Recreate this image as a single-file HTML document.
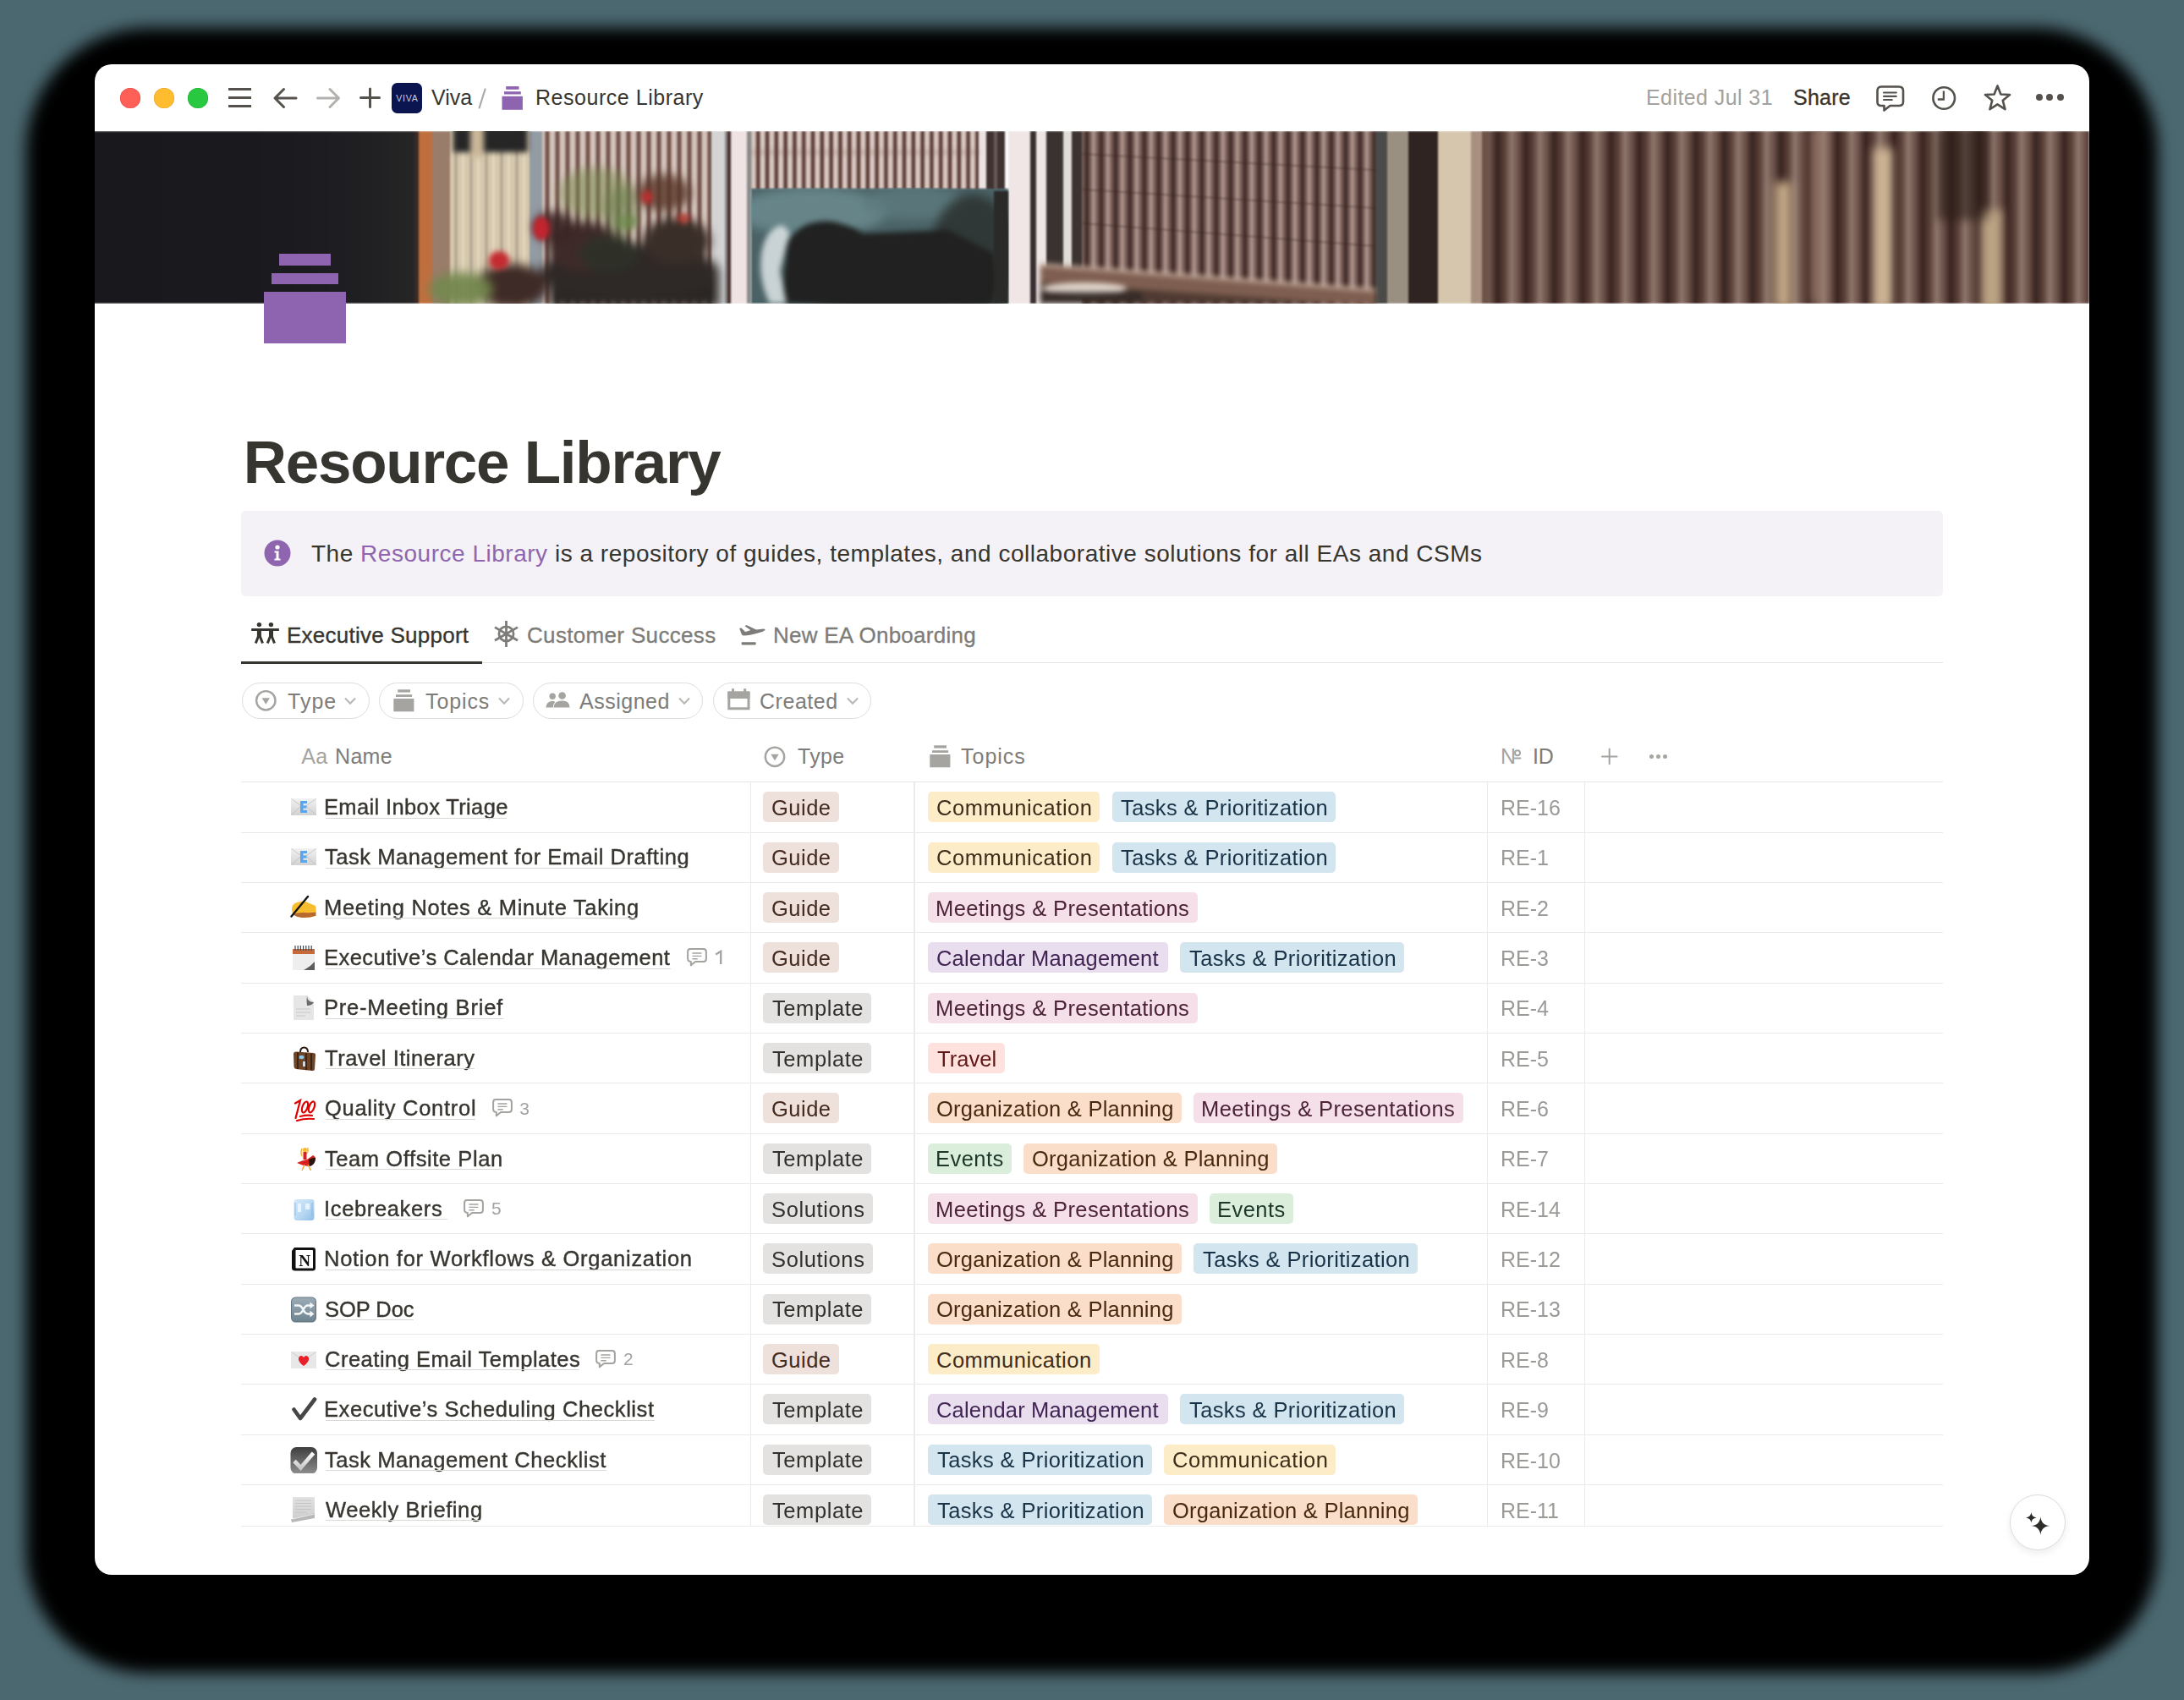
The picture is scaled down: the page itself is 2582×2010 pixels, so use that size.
<!DOCTYPE html><html><head><meta charset="utf-8"><style>
html,body{margin:0;padding:0}
body{width:2582px;height:2010px;position:relative;overflow:hidden;background:#4b6870;font-family:"Liberation Sans",sans-serif;font-kerning:normal}
.t{position:absolute;white-space:nowrap;line-height:normal}
svg{display:block}
</style></head><body>
<div style="position:absolute;left:31px;top:33px;width:2520px;height:1945px;background:#000;border-radius:145px;filter:blur(9px)"></div>
<div style="position:absolute;left:112px;top:76px;width:2358px;height:1786px;background:#fff;border-radius:20px;overflow:hidden"></div>
<div style="position:absolute;left:142px;top:103.5px;width:24px;height:24px;background:#fe5f57;border-radius:50%;box-shadow:inset 0 0 0 0.5px #e14640"></div>
<div style="position:absolute;left:182px;top:103.5px;width:24px;height:24px;background:#febc2e;border-radius:50%;box-shadow:inset 0 0 0 0.5px #dfa123"></div>
<div style="position:absolute;left:222px;top:103.5px;width:24px;height:24px;background:#28c840;border-radius:50%;box-shadow:inset 0 0 0 0.5px #1dad2b"></div>
<div style="position:absolute;left:269.5px;top:103.5px;width:27.5px;height:3px;background:#55514c"></div>
<div style="position:absolute;left:269.5px;top:113.7px;width:27.5px;height:3px;background:#55514c"></div>
<div style="position:absolute;left:269.5px;top:124.1px;width:27.5px;height:3px;background:#55514c"></div>
<svg style="position:absolute;left:318px;top:100px" width="40" height="32" viewBox="0 0 40 32"><path d="M7 16 H32 M17.5 5.5 L7 16 L17.5 26.5" fill="none" stroke="#55514c" stroke-width="3" stroke-linecap="round" stroke-linejoin="round"/></svg>
<svg style="position:absolute;left:368px;top:100px" width="40" height="32" viewBox="0 0 40 32"><path d="M7.5 16 H32 M22 5.5 L32.5 16 L22 26.5" fill="none" stroke="#b3b1ad" stroke-width="3" stroke-linecap="round" stroke-linejoin="round"/></svg>
<svg style="position:absolute;left:420px;top:100px" width="36" height="32" viewBox="0 0 36 32"><path d="M17.5 5 V26.5 M6.5 15.5 H28.5" fill="none" stroke="#55514c" stroke-width="3" stroke-linecap="round"/></svg>
<div style="position:absolute;left:463.2px;top:98px;width:35.7px;height:35.8px;background:#0b1651;border-radius:6.5px"></div>
<div class="t" style="left:463.2px;top:109.6px;width:36.3px;text-align:center;font-size:10.6px;line-height:12px;color:#d0cadc;letter-spacing:0.7px">VIVA</div>
<div id="tb_viva" class="t" style="left:510.00px;top:101.38px;font-size:25px;color:#37352f;font-weight:400;letter-spacing:0.000px;">Viva</div>
<svg style="position:absolute;left:560px;top:100px" width="20" height="32" viewBox="0 0 20 32"><path d="M13.6 5.4 L6.6 27.6" stroke="#a8a7a3" stroke-width="2" stroke-linecap="round"/></svg>
<svg style="position:absolute;left:593px;top:101px" width="27" height="29" viewBox="0 0 27 29"><rect x="5.2" y="1.1" width="15.3" height="3.7" fill="#8e64b0"/><rect x="3" y="7.2" width="19.8" height="3.3" fill="#8e64b0"/><rect x="0.5" y="12.8" width="24.4" height="16" fill="#8e64b0"/></svg>
<div id="tb_rl" class="t" style="left:633.00px;top:101.38px;font-size:25px;color:#37352f;font-weight:400;letter-spacing:0.533px;">Resource Library</div>
<div id="tb_edited" class="t" style="left:1946.00px;top:101.38px;font-size:25px;color:#a3a29e;font-weight:400;letter-spacing:0.417px;">Edited Jul 31</div>
<div id="tb_share" class="t" style="left:2120.00px;top:101.38px;font-size:25px;color:#37352f;font-weight:400;letter-spacing:0.250px;-webkit-text-stroke:0.3px #37352f">Share</div>
<svg style="position:absolute;left:2214px;top:98px" width="40" height="36" viewBox="0 0 40 36"><path d="M10 4.5 H31 Q36 4.5 36 9.5 V22.5 Q36 27 31 27 H20.5 L13.5 32.5 V27 H10 Q5.5 27 5.5 22.5 V9.5 Q5.5 4.5 10 4.5 Z" fill="none" stroke="#55514c" stroke-width="2.6" stroke-linejoin="round"/><path d="M13 11.5 H27.8 M13 15.8 H27.8 M13 20 H22.8" stroke="#55514c" stroke-width="2.2" stroke-linecap="round"/></svg>
<svg style="position:absolute;left:2280px;top:98px" width="36" height="36" viewBox="0 0 36 36"><circle cx="18.2" cy="18" r="12.8" fill="none" stroke="#55514c" stroke-width="2.6"/><path d="M17.9 9.5 V19.5 H10.8" fill="none" stroke="#55514c" stroke-width="2.3"/></svg>
<svg style="position:absolute;left:2340px;top:96px" width="44" height="40" viewBox="0 0 44 40"><polygon points="21.50,5.50 25.38,15.46 36.05,16.07 27.78,22.84 30.49,33.18 21.50,27.40 12.51,33.18 15.22,22.84 6.95,16.07 17.62,15.46" fill="none" stroke="#55514c" stroke-width="2.6" stroke-linejoin="round"/></svg>
<div style="position:absolute;left:2406.6px;top:111px;width:8px;height:8px;background:#55514c;border-radius:50%"></div>
<div style="position:absolute;left:2419.2px;top:111px;width:8px;height:8px;background:#55514c;border-radius:50%"></div>
<div style="position:absolute;left:2431.6px;top:111px;width:8px;height:8px;background:#55514c;border-radius:50%"></div>
<svg style="position:absolute;left:112px;top:155px" width="2358" height="204" viewBox="0 0 2358 204"><defs><filter color-interpolation-filters="sRGB" id="b1" x="-5%" y="-5%" width="110%" height="110%"><feGaussianBlur stdDeviation="1.2"/></filter><filter color-interpolation-filters="sRGB" id="b3" x="-20%" y="-20%" width="140%" height="140%"><feGaussianBlur stdDeviation="3"/></filter><filter color-interpolation-filters="sRGB" id="b6" x="-30%" y="-30%" width="160%" height="160%"><feGaussianBlur stdDeviation="6"/></filter><filter color-interpolation-filters="sRGB" id="b10" x="-40%" y="-40%" width="180%" height="180%"><feGaussianBlur stdDeviation="10"/></filter><linearGradient id="gA" x1="0" x2="1" y1="0" y2="0"><stop offset="0" stop-color="#e0d0ca"/><stop offset="0.3" stop-color="#d4c2bc"/><stop offset="0.48" stop-color="#6a4c46"/><stop offset="0.7" stop-color="#4e302a"/><stop offset="0.86" stop-color="#b8a098"/><stop offset="1" stop-color="#e0d0ca"/></linearGradient><pattern id="pA" patternUnits="userSpaceOnUse" width="10.8" height="204" x="0"><rect width="10.8" height="204" fill="url(#gA)"/></pattern><linearGradient id="gB" x1="0" x2="1" y1="0" y2="0"><stop offset="0" stop-color="#d8c8c0"/><stop offset="0.28" stop-color="#d0beb6"/><stop offset="0.45" stop-color="#7a5c54"/><stop offset="0.68" stop-color="#6a4c44"/><stop offset="0.85" stop-color="#c4b0a8"/><stop offset="1" stop-color="#d8c8c0"/></linearGradient><pattern id="pB" patternUnits="userSpaceOnUse" width="12" height="204" x="0"><rect width="12" height="204" fill="url(#gB)"/></pattern><linearGradient id="gC" x1="0" x2="1" y1="0" y2="0"><stop offset="0" stop-color="#3e2824"/><stop offset="0.25" stop-color="#7a605a"/><stop offset="0.45" stop-color="#b09890"/><stop offset="0.65" stop-color="#866c64"/><stop offset="1" stop-color="#3e2824"/></linearGradient><pattern id="pC" patternUnits="userSpaceOnUse" width="17" height="204" x="0"><rect width="17" height="204" fill="url(#gC)"/></pattern><linearGradient id="gD" x1="0" x2="1" y1="0" y2="0"><stop offset="0" stop-color="#8e766c"/><stop offset="0.25" stop-color="#6a5048"/><stop offset="0.5" stop-color="#3a2420"/><stop offset="0.75" stop-color="#5a4038"/><stop offset="1" stop-color="#8e766c"/></linearGradient><pattern id="pD" patternUnits="userSpaceOnUse" width="33.5" height="204" x="0"><rect width="33.5" height="204" fill="url(#gD)"/></pattern><pattern id="pE" patternUnits="userSpaceOnUse" width="18" height="204" x="0"><rect width="18" height="204" fill="#d6c8ac"/><rect x="11" width="4" height="204" fill="#b8ac9a"/><rect x="2" width="3" height="204" fill="#e2d6c0"/></pattern><clipPath id="cb"><rect x="776" y="67" width="304" height="140"/></clipPath><linearGradient id="gL" x1="0" x2="1" y1="0" y2="0"><stop offset="0" stop-color="#19181d"/><stop offset="0.6" stop-color="#1b1a1f"/><stop offset="0.85" stop-color="#202023"/><stop offset="1" stop-color="#262626"/></linearGradient></defs><g filter="url(#b1)"><rect x="-12.0" y="0.0" width="394.0" height="204.0" fill="url(#gL)" /><rect x="378.0" y="0.0" width="6.0" height="204.0" fill="#3a2a26" /><rect x="383.0" y="0.0" width="17.0" height="204.0" fill="#bf6f3e" /><rect x="399.0" y="0.0" width="22.0" height="204.0" fill="#9a7c6a" /><rect x="420.0" y="0.0" width="95.0" height="204.0" fill="url(#pE)" /><rect x="514.0" y="0.0" width="15.0" height="204.0" fill="#939ba3" /><rect x="529.0" y="0.0" width="204.0" height="204.0" fill="url(#pB)" /><rect x="729.0" y="0.0" width="19.0" height="204.0" fill="#d4d4d4" /><rect x="745.0" y="0.0" width="3.0" height="204.0" fill="#8a8a8a" /><rect x="748.0" y="0.0" width="4.0" height="204.0" fill="#4a3030" /><rect x="752.0" y="0.0" width="20.0" height="204.0" fill="#efe3e3" /><rect x="771.0" y="0.0" width="5.0" height="204.0" fill="#8a8a8a" /><rect x="776.0" y="0.0" width="270.0" height="70.0" fill="url(#pA)" /><rect x="1045.0" y="0.0" width="9.0" height="70.0" fill="#ece4e2" /><rect x="1054.0" y="0.0" width="22.0" height="70.0" fill="#3e3230" /><rect x="1063.0" y="0.0" width="4.0" height="70.0" fill="#6a5a56" /><rect x="1080.0" y="0.0" width="27.0" height="204.0" fill="#f0e6e6" /><rect x="1106.0" y="0.0" width="7.0" height="204.0" fill="#383030" /><rect x="1113.0" y="0.0" width="12.0" height="204.0" fill="#eee6e4" /><rect x="1125.0" y="0.0" width="20.0" height="165.0" fill="#3a3230" /><rect x="1145.0" y="0.0" width="10.0" height="165.0" fill="#e0dcd8" /><rect x="1155.0" y="0.0" width="12.0" height="165.0" fill="#3c3230" /><rect x="1167.0" y="0.0" width="347.0" height="204.0" fill="url(#pC)" /><rect x="1514.0" y="0.0" width="14.0" height="204.0" fill="#4a4a48" /><rect x="1528.0" y="0.0" width="25.0" height="204.0" fill="#9a9082" /><rect x="1553.0" y="0.0" width="35.0" height="204.0" fill="#302422" /><rect x="1588.0" y="0.0" width="39.0" height="204.0" fill="#d6c6ae" /><rect x="1627.0" y="0.0" width="13.0" height="204.0" fill="#a89080" /><rect x="1640.0" y="0.0" width="8.0" height="204.0" fill="#6e5448" /><rect x="1648.0" y="0.0" width="710.0" height="204.0" fill="url(#pD)" /></g><g filter="url(#b3)"><rect x="424.0" y="-5.0" width="88.0" height="30.0" fill="#262626" /><rect x="444.0" y="-5.0" width="16.0" height="36.0" fill="#cbb89a" /><rect x="776.0" y="24.0" width="270.0" height="2.0" fill="#5a3c36" opacity="0.5"/></g><g filter="url(#b1)"><rect x="776.0" y="68.0" width="304.0" height="136.0" fill="#4a6266" /></g><g clip-path="url(#cb)"><g filter="url(#b6)"><ellipse cx="848.0" cy="95.0" rx="90.0" ry="28.0" fill="#6e8e92" opacity="0.8"/><ellipse cx="968.0" cy="85.0" rx="60.0" ry="20.0" fill="#5e7a7e" opacity="0.8"/><ellipse cx="1038.0" cy="145.0" rx="50.0" ry="70.0" fill="#2e3432" opacity="0.9"/><ellipse cx="948.0" cy="175.0" rx="130.0" ry="40.0" fill="#262826" /></g><g filter="url(#b3)"><path d="M814 204 L818 135 Q833 103 873 107 Q898 113 908 121 L1009 117 L1063 145 L1063 204 Z" fill="#202120" /><path d="M788 145 Q793 115 813 111 L822 120 L810 165 L818 204 L798 204 Q784 175 788 145 Z" fill="#dfe6e8" opacity="0.85"/></g></g><g filter="url(#b1)"><rect x="1063.0" y="71.0" width="17.0" height="133.0" fill="#2a2a28" /></g><g filter="url(#b3)"><path d="M1118 161 L1514 191 L1514 204 L1118 204 Z" fill="#4e3a32" /><path d="M1118 159 L1514 189 L1514 207 L1118 179 Z" fill="#7e5e50" /><path d="M1118 156 L1514 186 L1514 190 L1118 160 Z" fill="#c4ac9c" /><ellipse cx="1170.0" cy="186.0" rx="50.0" ry="7.0" fill="#eee4da" opacity="0.9"/><rect x="1118.0" y="190.0" width="120.0" height="14.0" fill="#2e2624" opacity="0.7"/></g><g filter="url(#b1)" opacity="0.35"><path d="M1167 26 L1514 45 L1514 47 L1167 28 Z" fill="#3a2420" /><path d="M1167 68 L1514 90 L1514 92 L1167 70 Z" fill="#3a2420" /><path d="M1167 108 L1514 135 L1514 137 L1167 110 Z" fill="#3a2420" /></g><g filter="url(#b6)"><rect x="538.0" y="163.0" width="200.0" height="45.0" fill="#2a2624" /><ellipse cx="633.0" cy="167.0" rx="105.0" ry="34.0" fill="#2e2826" /><ellipse cx="578.0" cy="137.0" rx="42.0" ry="30.0" fill="#3e2a28" /><ellipse cx="688.0" cy="130.0" rx="40.0" ry="28.0" fill="#3a2e28" /><ellipse cx="493.0" cy="183.0" rx="42.0" ry="26.0" fill="#3e2a26" /><ellipse cx="608.0" cy="145.0" rx="35.0" ry="22.0" fill="#2e3028" /><ellipse cx="593.0" cy="73.0" rx="44.0" ry="30.0" fill="#7a8a50" opacity="0.55"/><ellipse cx="623.0" cy="95.0" rx="20.0" ry="30.0" fill="#6e8050" opacity="0.6"/><ellipse cx="433.0" cy="187.0" rx="38.0" ry="20.0" fill="#74884e" opacity="0.95"/><ellipse cx="673.0" cy="73.0" rx="32.0" ry="22.0" fill="#5a3a2c" opacity="0.85"/><ellipse cx="543.0" cy="113.0" rx="24.0" ry="18.0" fill="#3a2424" opacity="0.9"/></g><g filter="url(#b3)"><ellipse cx="528.0" cy="115.0" rx="10.0" ry="14.0" fill="#c4242e" /><ellipse cx="478.0" cy="153.0" rx="12.0" ry="11.0" fill="#c42a30" /><ellipse cx="653.0" cy="78.0" rx="7.0" ry="8.0" fill="#b83030" /><ellipse cx="628.0" cy="107.0" rx="14.0" ry="9.0" fill="#6e8a4c" opacity="0.7"/><ellipse cx="696.0" cy="103.0" rx="8.0" ry="6.0" fill="#c03a30" opacity="0.8"/></g><g filter="url(#b6)"><rect x="1986.0" y="60.0" width="20.0" height="150.0" fill="#c4aa88" /><rect x="2103.0" y="20.0" width="22.0" height="190.0" fill="#ccb494" /><rect x="2230.0" y="93.0" width="24.0" height="120.0" fill="#bca484" /><rect x="2178.0" y="-5.0" width="60.0" height="110.0" fill="#2a1c18" opacity="0.6"/><rect x="2028.0" y="-5.0" width="18.0" height="210.0" fill="#a08070" opacity="0.7"/></g></svg>
<div style="position:absolute;left:330px;top:300px;width:61px;height:13.5px;background:#8e64b0"></div>
<div style="position:absolute;left:321px;top:323px;width:79px;height:13px;background:#8e64b0"></div>
<div style="position:absolute;left:312px;top:345px;width:97px;height:61px;background:#8e64b0"></div>
<div id="title" class="t" style="left:287.80px;top:506.45px;font-size:71px;color:#37352f;font-weight:700;letter-spacing:-1.267px;">Resource Library</div>
<div style="position:absolute;left:285px;top:603.6px;width:2012px;height:101px;background:#f4f2f7;border-radius:5px"></div>
<svg style="position:absolute;left:312px;top:638px" width="32" height="32" viewBox="0 0 32 32"><circle cx="16" cy="16" r="15.5" fill="#9065b0"/><circle cx="16" cy="9" r="2.6" fill="#fff"/><path d="M12.5 13.5 H17.5 V22.5 H19.5 V24.5 H12.5 V22.5 H14.5 V15.5 H12.5 Z" fill="#fff"/></svg>
<div id="callout" class="t" style="left:368.00px;top:639.16px;font-size:28px;color:#37352f;letter-spacing:0.519px">The <span style="color:#9065b0">Resource Library</span> is a repository of guides, templates, and collaborative solutions for all EAs and CSMs</div>
<svg style="position:absolute;left:294px;top:733px" width="40" height="30" viewBox="0 0 40 30"><g fill="#37352f"><circle cx="12.4" cy="5.6" r="2.7"/><circle cx="26.4" cy="5.6" r="2.7"/><rect x="3.1" y="10" width="32.8" height="3" rx="0.5"/><rect x="9.9" y="11" width="5" height="9"/><rect x="24" y="11" width="5" height="9"/></g><path d="M12.4 17 L8.3 27.5 M12.4 17 L16.5 27.5 M26.4 17 L22.3 27.5 M26.4 17 L30.5 27.5" stroke="#37352f" stroke-width="3" stroke-linecap="butt"/></svg>
<div id="tab1" class="t" style="left:339.00px;top:736.07px;font-size:26px;color:#37352f;font-weight:400;letter-spacing:0.250px;-webkit-text-stroke:0.35px #37352f">Executive Support</div>
<svg style="position:absolute;left:583px;top:733px" width="32" height="34" viewBox="0 0 32 34"><g stroke="#7d7c78" stroke-width="2.8" fill="none"><circle cx="15.5" cy="16.4" r="8.6"/><path d="M15.5 1 V32"/><path d="M2 8.6 L29 24.2 M2 24.2 L29 8.6"/></g></svg>
<div id="tab2" class="t" style="left:623.00px;top:736.07px;font-size:26px;color:#7d7c78;font-weight:400;letter-spacing:0.333px;-webkit-text-stroke:0.3px #7d7c78">Customer Success</div>
<svg style="position:absolute;left:872px;top:738px" width="36" height="28" viewBox="0 0 36 28"><path d="M2.2 5 Q3 4 4.5 4.6 L9 9 Q12 8.5 15.4 7 L8.5 2.2 Q9.5 1.2 11.5 1.4 L22 6.5 Q27 5.8 30.5 5.4 Q33 5.5 32.4 7.2 Q30 9 24 10.5 Q14 13.5 8 13.6 Q5.5 13.5 4.8 12 Z" fill="#7d7c78"/><rect x="4.6" y="21.2" width="17.1" height="3.2" rx="0.8" fill="#7d7c78"/></svg>
<div id="tab3" class="t" style="left:914.00px;top:736.07px;font-size:26px;color:#7d7c78;font-weight:400;letter-spacing:0.250px;-webkit-text-stroke:0.3px #7d7c78">New EA Onboarding</div>
<div style="position:absolute;left:285px;top:783.2px;width:2012px;height:1.2px;background:#e4e4e2"></div>
<div style="position:absolute;left:285px;top:781.5px;width:285px;height:3px;background:#37352f"></div>
<div style="position:absolute;left:285.7px;top:807.3px;width:150.90000000000003px;height:42.3px;box-sizing:border-box;border:1.3px solid #dedddb;border-radius:22px"></div>
<svg style="position:absolute;left:301px;top:815px" width="28" height="28" viewBox="0 0 28 28"><circle cx="13.3" cy="13.3" r="11.2" fill="none" stroke="#a5a4a1" stroke-width="2.4"/><path d="M8.6 10.2 H18 L13.3 17.8 Z" fill="#a5a4a1"/></svg>
<div id="p1" class="t" style="left:340.00px;top:815.08px;font-size:25px;color:#7d7c78;font-weight:400;letter-spacing:1.000px;">Type</div>
<svg style="position:absolute;left:405px;top:822px" width="18" height="14" viewBox="0 0 16 14"><path d="M2 3.5 L8 9.8 L14 3.5" fill="none" stroke="#b8b7b4" stroke-width="2"/></svg>
<div style="position:absolute;left:448px;top:807.3px;width:170.60000000000002px;height:42.3px;box-sizing:border-box;border:1.3px solid #dedddb;border-radius:22px"></div>
<svg style="position:absolute;left:465px;top:814px" width="25" height="28" viewBox="0 0 25 28"><g fill="#a5a4a1"><rect x="5.2" y="1.3" width="14.8" height="3.3"/><rect x="3" y="7.2" width="19.1" height="2.8"/><rect x="0.3" y="12" width="24.1" height="15.3"/></g></svg>
<div id="p2" class="t" style="left:503.00px;top:815.08px;font-size:25px;color:#7d7c78;font-weight:400;letter-spacing:0.880px;">Topics</div>
<svg style="position:absolute;left:587px;top:822px" width="18" height="14" viewBox="0 0 16 14"><path d="M2 3.5 L8 9.8 L14 3.5" fill="none" stroke="#b8b7b4" stroke-width="2"/></svg>
<div style="position:absolute;left:630px;top:807.3px;width:201.39999999999998px;height:42.3px;box-sizing:border-box;border:1.3px solid #dedddb;border-radius:22px"></div>
<svg style="position:absolute;left:645px;top:818px" width="30" height="21" viewBox="0 0 30 21"><g fill="#a5a4a1"><circle cx="8.2" cy="5.3" r="3.7"/><circle cx="19.6" cy="4.5" r="4.3"/><path d="M0.3 18.6 Q1 11.5 8 10.8 Q10.5 11 11.5 12 Q9 14 8.8 18.6 Z"/><path d="M9.5 18.6 Q10 10.6 19.6 10.6 Q28.5 10.8 28.5 18.6 Z"/></g></svg>
<div id="p3" class="t" style="left:685.00px;top:815.08px;font-size:25px;color:#7d7c78;font-weight:400;letter-spacing:0.514px;">Assigned</div>
<svg style="position:absolute;left:800px;top:822px" width="18" height="14" viewBox="0 0 16 14"><path d="M2 3.5 L8 9.8 L14 3.5" fill="none" stroke="#b8b7b4" stroke-width="2"/></svg>
<div style="position:absolute;left:843.2px;top:807.3px;width:187.29999999999995px;height:42.3px;box-sizing:border-box;border:1.3px solid #dedddb;border-radius:22px"></div>
<svg style="position:absolute;left:860px;top:814px" width="27" height="26" viewBox="0 0 27 26"><g fill="#a5a4a1"><rect x="0.3" y="3.6" width="26.2" height="8.4"/><rect x="5" y="0.2" width="3" height="4"/><rect x="19.2" y="0.2" width="3" height="4"/></g><rect x="1.8" y="5" width="23.2" height="18.8" fill="none" stroke="#a5a4a1" stroke-width="3"/></svg>
<div id="p4" class="t" style="left:898.00px;top:815.08px;font-size:25px;color:#7d7c78;font-weight:400;letter-spacing:0.533px;">Created</div>
<svg style="position:absolute;left:999px;top:822px" width="18" height="14" viewBox="0 0 16 14"><path d="M2 3.5 L8 9.8 L14 3.5" fill="none" stroke="#b8b7b4" stroke-width="2"/></svg>
<div class="t" style="left:356.3px;top:879.77px;font-size:25px;color:#a5a4a1;letter-spacing:0.2px">Aa</div>
<div id="h_name" class="t" style="left:396.00px;top:879.77px;font-size:25px;color:#7d7c78;font-weight:400;letter-spacing:0.333px;">Name</div>
<svg style="position:absolute;left:902px;top:881px" width="30" height="28" viewBox="0 0 30 28"><circle cx="14" cy="13.8" r="11.2" fill="none" stroke="#a5a4a1" stroke-width="2.4"/><path d="M9.3 10.7 H18.7 L14 18.3 Z" fill="#a5a4a1"/></svg>
<div id="h_type" class="t" style="left:943.00px;top:879.77px;font-size:25px;color:#7d7c78;font-weight:400;letter-spacing:0.333px;">Type</div>
<svg style="position:absolute;left:1099px;top:880px" width="25" height="28" viewBox="0 0 25 28"><g fill="#a5a4a1"><rect x="5.2" y="1.3" width="14.8" height="3.3"/><rect x="3" y="7.2" width="19.1" height="2.8"/><rect x="0.3" y="12" width="24.1" height="15.3"/></g></svg>
<div id="h_topics" class="t" style="left:1136.00px;top:879.77px;font-size:25px;color:#7d7c78;font-weight:400;letter-spacing:1.000px;">Topics</div>
<div class="t" style="left:1774px;top:879.77px;font-size:25px;color:#a5a4a1">N</div>
<svg style="position:absolute;left:1790px;top:885.5px" width="12" height="14" viewBox="0 0 12 14"><circle cx="4" cy="4.2" r="3" fill="none" stroke="#a5a4a1" stroke-width="2"/><rect x="0.2" y="9.5" width="8" height="2" fill="#a5a4a1"/></svg>
<div id="h_id" class="t" style="left:1812.00px;top:879.77px;font-size:25px;color:#7d7c78;font-weight:400;letter-spacing:-0.200px;">ID</div>
<svg style="position:absolute;left:1890px;top:882px" width="26" height="26" viewBox="0 0 26 26"><path d="M12.7 3.6 V21.2 M4 12.6 H21.6" stroke="#a5a4a1" stroke-width="2" stroke-linecap="round"/></svg>
<div style="position:absolute;left:1949.7px;top:892px;width:5.2px;height:5.2px;background:#a5a4a1;border-radius:50%"></div>
<div style="position:absolute;left:1958.1000000000001px;top:892px;width:5.2px;height:5.2px;background:#a5a4a1;border-radius:50%"></div>
<div style="position:absolute;left:1966.1000000000001px;top:892px;width:5.2px;height:5.2px;background:#a5a4a1;border-radius:50%"></div>
<div style="position:absolute;left:285px;top:923.8px;width:2012px;height:1.3px;background:#e6e6e4"></div>
<div style="position:absolute;left:0;top:0;width:2582px;height:1804.7px;overflow:hidden">
<svg style="position:absolute;left:343px;top:938.1px" width="32" height="32" viewBox="0 0 32 32"><defs><linearGradient id="g0e" x1="0" y1="0" x2="0" y2="1"><stop offset="0" stop-color="#f2f2f2"/><stop offset="1" stop-color="#d2d2d2"/></linearGradient></defs><rect x="1" y="6" width="30" height="20" rx="1" fill="url(#g0e)"/><path d="M1.5 6.5 L16 17 L30.5 6.5 M1.5 25.5 L12 16 M30.5 25.5 L20 16" stroke="#bdbdbd" stroke-width="0.8" fill="none"/><path d="M12 9 H20 V12 H15.5 V14.6 H19.5 V17.4 H15.5 V20 H20 V23 H12 Z" fill="#58a6ee"/></svg>
<div id="n0" class="t" style="left:383.00px;top:940.12px;font-size:25.5px;color:#37352f;font-weight:400;letter-spacing:0.365px;-webkit-text-stroke:0.4px #37352f">Email Inbox Triage</div>
<div style="position:absolute;left:384.5px;top:966.4999999999999px;width:214.79999999999995px;height:1.2px;background:#d9d8d5"></div>
<div style="position:absolute;left:902px;top:936.3px;width:90px;height:36px;background:#eee0da;border-radius:5px"></div>
<div id="ty0" class="t" style="left:912.00px;top:940.82px;font-size:25.5px;color:#442a1e;font-weight:400;letter-spacing:0.500px;">Guide</div>
<div style="position:absolute;left:1097px;top:936.3px;width:203.1px;height:36px;background:#fdecc8;border-radius:5px"></div>
<div id="tp0_0" class="t" style="left:1107.00px;top:940.82px;font-size:25.5px;color:#402c1b;font-weight:400;letter-spacing:0.575px;">Communication</div>
<div style="position:absolute;left:1314.6px;top:936.3px;width:264.9px;height:36px;background:#d3e5ef;border-radius:5px"></div>
<div id="tp0_1" class="t" style="left:1325.00px;top:940.82px;font-size:25.5px;color:#183347;font-weight:400;letter-spacing:0.386px;">Tasks &amp; Prioritization</div>
<div id="id0" class="t" style="left:1774.00px;top:941.07px;font-size:25px;color:#9b9a97;font-weight:400;letter-spacing:0.000px;">RE-16</div>
<div style="position:absolute;left:285px;top:983.5px;width:2012px;height:1.5px;background:linear-gradient(180deg,#f1f1f0,#e9e9e7 35%,#e9e9e7 65%,#f3f3f2)"></div>
<svg style="position:absolute;left:343px;top:997.44px" width="32" height="32" viewBox="0 0 32 32"><defs><linearGradient id="g1e" x1="0" y1="0" x2="0" y2="1"><stop offset="0" stop-color="#f2f2f2"/><stop offset="1" stop-color="#d2d2d2"/></linearGradient></defs><rect x="1" y="6" width="30" height="20" rx="1" fill="url(#g1e)"/><path d="M1.5 6.5 L16 17 L30.5 6.5 M1.5 25.5 L12 16 M30.5 25.5 L20 16" stroke="#bdbdbd" stroke-width="0.8" fill="none"/><path d="M12 9 H20 V12 H15.5 V14.6 H19.5 V17.4 H15.5 V20 H20 V23 H12 Z" fill="#58a6ee"/></svg>
<div id="n1" class="t" style="left:384.00px;top:999.46px;font-size:25.5px;color:#37352f;font-weight:400;letter-spacing:0.552px;-webkit-text-stroke:0.4px #37352f">Task Management for Email Drafting</div>
<div style="position:absolute;left:384.5px;top:1025.84px;width:428.79999999999995px;height:1.2px;background:#d9d8d5"></div>
<div style="position:absolute;left:902px;top:995.64px;width:90px;height:36px;background:#eee0da;border-radius:5px"></div>
<div id="ty1" class="t" style="left:912.00px;top:1000.16px;font-size:25.5px;color:#442a1e;font-weight:400;letter-spacing:0.500px;">Guide</div>
<div style="position:absolute;left:1097px;top:995.64px;width:203.1px;height:36px;background:#fdecc8;border-radius:5px"></div>
<div id="tp1_0" class="t" style="left:1107.00px;top:1000.16px;font-size:25.5px;color:#402c1b;font-weight:400;letter-spacing:0.575px;">Communication</div>
<div style="position:absolute;left:1314.6px;top:995.64px;width:264.9px;height:36px;background:#d3e5ef;border-radius:5px"></div>
<div id="tp1_1" class="t" style="left:1325.00px;top:1000.16px;font-size:25.5px;color:#183347;font-weight:400;letter-spacing:0.386px;">Tasks &amp; Prioritization</div>
<div id="id1" class="t" style="left:1774.00px;top:1000.41px;font-size:25px;color:#9b9a97;font-weight:400;letter-spacing:0.000px;">RE-1</div>
<div style="position:absolute;left:285px;top:1042.5px;width:2012px;height:1.5px;background:linear-gradient(180deg,#f1f1f0,#e9e9e7 35%,#e9e9e7 65%,#f3f3f2)"></div>
<svg style="position:absolute;left:343px;top:1056.78px" width="32" height="32" viewBox="0 0 32 32"><path d="M2 17.5 Q2.5 11.5 8 10 L14.5 8.5 Q18 8.2 21.5 10.5 Q26 12 29.8 14 Q30.8 15 30.6 19 L30.4 25.5 Q24 28.5 15 27.5 Q8 27.5 3.5 24 Q2 21.5 2 17.5 Z" fill="#f7bd2f"/><path d="M4 23.5 Q10 21.5 16 22 Q24 22.5 30.4 21.5 L30.4 25.8 Q22 28.5 14 28 Q8 27.5 4.5 25 Z" fill="#b86a2e"/><path d="M1.5 26.5 L21 3" stroke="#151515" stroke-width="2.4" stroke-linecap="round"/></svg>
<div id="n2" class="t" style="left:383.00px;top:1058.80px;font-size:25.5px;color:#37352f;font-weight:400;letter-spacing:0.700px;-webkit-text-stroke:0.4px #37352f">Meeting Notes &amp; Minute Taking</div>
<div style="position:absolute;left:384.5px;top:1085.1799999999998px;width:369.4px;height:1.2px;background:#d9d8d5"></div>
<div style="position:absolute;left:902px;top:1054.98px;width:90px;height:36px;background:#eee0da;border-radius:5px"></div>
<div id="ty2" class="t" style="left:912.00px;top:1059.50px;font-size:25.5px;color:#442a1e;font-weight:400;letter-spacing:0.500px;">Guide</div>
<div style="position:absolute;left:1097px;top:1054.98px;width:318.8px;height:36px;background:#f5e0e9;border-radius:5px"></div>
<div id="tp2_0" class="t" style="left:1106.00px;top:1059.50px;font-size:25.5px;color:#4c2337;font-weight:400;letter-spacing:0.400px;">Meetings &amp; Presentations</div>
<div id="id2" class="t" style="left:1774.00px;top:1059.75px;font-size:25px;color:#9b9a97;font-weight:400;letter-spacing:0.000px;">RE-2</div>
<div style="position:absolute;left:285px;top:1101.5px;width:2012px;height:1.5px;background:linear-gradient(180deg,#f1f1f0,#e9e9e7 35%,#e9e9e7 65%,#f3f3f2)"></div>
<svg style="position:absolute;left:343px;top:1116.1200000000001px" width="32" height="32" viewBox="0 0 32 32"><rect x="3" y="6" width="26" height="25" fill="#eeeeee"/><rect x="3" y="6" width="26" height="6" fill="#c8693a"/><path d="M6 2 V8 M9.2 2 V8 M12.4 2 V8 M15.6 2 V8 M18.8 2 V8 M22 2 V8 M25.2 2 V8" stroke="#3a4a56" stroke-width="1.2"/><path d="M16 31 Q24 27 29 21 V31 Z" fill="#5c5c5c"/></svg>
<div id="n3" class="t" style="left:383.00px;top:1118.14px;font-size:25.5px;color:#37352f;font-weight:400;letter-spacing:0.463px;-webkit-text-stroke:0.4px #37352f">Executive’s Calendar Management</div>
<div style="position:absolute;left:384.5px;top:1144.52px;width:408.1px;height:1.2px;background:#d9d8d5"></div>
<svg style="position:absolute;left:810.6999999999999px;top:1119.22px" width="29.6" height="28.2" viewBox="0 0 28 26"><path d="M4.6 2.5 H19.4 Q22.6 2.5 22.6 5.8 V13.6 Q22.6 16.6 19.4 16.6 H10.5 L5.5 20.8 V16.6 Q2 16.4 2 13.4 V5.8 Q2 2.5 4.6 2.5 Z" fill="none" stroke="#a3a29f" stroke-width="1.9" stroke-linejoin="round"/><path d="M7 7.2 H17.5 M7 10.4 H17.5 M7 13.6 H13" stroke="#a3a29f" stroke-width="1.3"/></svg>
<svg style="position:absolute;left:844.3px;top:1123.02px" width="14" height="18" viewBox="0 0 14 18"><path d="M2.2 5.4 L8.2 1.8 V17" fill="none" stroke="#a3a29f" stroke-width="2.3" stroke-linejoin="miter"/></svg>
<div style="position:absolute;left:902px;top:1114.3200000000002px;width:90px;height:36px;background:#eee0da;border-radius:5px"></div>
<div id="ty3" class="t" style="left:912.00px;top:1118.84px;font-size:25.5px;color:#442a1e;font-weight:400;letter-spacing:0.500px;">Guide</div>
<div style="position:absolute;left:1097px;top:1114.3200000000002px;width:283.9px;height:36px;background:#e8deee;border-radius:5px"></div>
<div id="tp3_0" class="t" style="left:1107.00px;top:1118.84px;font-size:25.5px;color:#412454;font-weight:400;letter-spacing:0.172px;">Calendar Management</div>
<div style="position:absolute;left:1395.4px;top:1114.3200000000002px;width:264.9px;height:36px;background:#d3e5ef;border-radius:5px"></div>
<div id="tp3_1" class="t" style="left:1406.00px;top:1118.84px;font-size:25.5px;color:#183347;font-weight:400;letter-spacing:0.386px;">Tasks &amp; Prioritization</div>
<div id="id3" class="t" style="left:1774.00px;top:1119.10px;font-size:25px;color:#9b9a97;font-weight:400;letter-spacing:0.000px;">RE-3</div>
<div style="position:absolute;left:285px;top:1161.5px;width:2012px;height:1.5px;background:linear-gradient(180deg,#f1f1f0,#e9e9e7 35%,#e9e9e7 65%,#f3f3f2)"></div>
<svg style="position:absolute;left:343px;top:1175.46px" width="32" height="32" viewBox="0 0 32 32"><path d="M4 2 H20 L28 10 V31 H4 Z" fill="#e6e6e6"/><path d="M20 2 Q20 10 28 10 Q26 14 20 14 Q19 8 20 2 Z" fill="#6a6a6a"/><path d="M7 18 H24 M7 22 H24 M7 26 H18" stroke="#c8c8c8" stroke-width="1"/></svg>
<div id="n4" class="t" style="left:383.00px;top:1177.48px;font-size:25.5px;color:#37352f;font-weight:400;letter-spacing:0.800px;-webkit-text-stroke:0.4px #37352f">Pre-Meeting Brief</div>
<div style="position:absolute;left:384.5px;top:1203.86px;width:210.20000000000005px;height:1.2px;background:#d9d8d5"></div>
<div style="position:absolute;left:902px;top:1173.66px;width:128px;height:36px;background:#e3e2e0;border-radius:5px"></div>
<div id="ty4" class="t" style="left:913.00px;top:1178.18px;font-size:25.5px;color:#32302c;font-weight:400;letter-spacing:0.571px;">Template</div>
<div style="position:absolute;left:1097px;top:1173.66px;width:318.8px;height:36px;background:#f5e0e9;border-radius:5px"></div>
<div id="tp4_0" class="t" style="left:1106.00px;top:1178.18px;font-size:25.5px;color:#4c2337;font-weight:400;letter-spacing:0.400px;">Meetings &amp; Presentations</div>
<div id="id4" class="t" style="left:1774.00px;top:1178.43px;font-size:25px;color:#9b9a97;font-weight:400;letter-spacing:0.000px;">RE-4</div>
<div style="position:absolute;left:285px;top:1220.5px;width:2012px;height:1.5px;background:linear-gradient(180deg,#f1f1f0,#e9e9e7 35%,#e9e9e7 65%,#f3f3f2)"></div>
<svg style="position:absolute;left:343px;top:1234.8px" width="32" height="32" viewBox="0 0 32 32"><path d="M12 9 Q12 3.5 16.5 3.5 Q21 3.5 21 9" stroke="#2a1a12" stroke-width="2" fill="none"/><path d="M4 11 Q4 8.5 7 8.5 L28 10 Q30.5 10.5 30 13 L29 29 Q29 31.5 26 31 L7 29 Q4.5 28.5 4.5 26 Z" fill="#6e4426"/><path d="M9 9 V29 M19 10 V30" stroke="#2e1a10" stroke-width="1.5"/><path d="M25 10.5 V30" stroke="#3a2214" stroke-width="2"/><ellipse cx="13.5" cy="15" rx="3" ry="2.2" fill="#8cc4e6"/><rect x="15" y="20" width="3" height="6" fill="#d0d8de"/></svg>
<div id="n5" class="t" style="left:384.00px;top:1236.82px;font-size:25.5px;color:#37352f;font-weight:400;letter-spacing:0.520px;-webkit-text-stroke:0.4px #37352f">Travel Itinerary</div>
<div style="position:absolute;left:384.5px;top:1263.1999999999998px;width:176.39999999999998px;height:1.2px;background:#d9d8d5"></div>
<div style="position:absolute;left:902px;top:1233.0px;width:128px;height:36px;background:#e3e2e0;border-radius:5px"></div>
<div id="ty5" class="t" style="left:913.00px;top:1237.52px;font-size:25.5px;color:#32302c;font-weight:400;letter-spacing:0.571px;">Template</div>
<div style="position:absolute;left:1097px;top:1233.0px;width:90.8px;height:36px;background:#ffe2dd;border-radius:5px"></div>
<div id="tp5_0" class="t" style="left:1108.00px;top:1237.52px;font-size:25.5px;color:#5d1715;font-weight:400;letter-spacing:0.040px;">Travel</div>
<div id="id5" class="t" style="left:1774.00px;top:1237.77px;font-size:25px;color:#9b9a97;font-weight:400;letter-spacing:0.000px;">RE-5</div>
<div style="position:absolute;left:285px;top:1279.5px;width:2012px;height:1.5px;background:linear-gradient(180deg,#f1f1f0,#e9e9e7 35%,#e9e9e7 65%,#f3f3f2)"></div>
<svg style="position:absolute;left:343px;top:1294.14px" width="32" height="32" viewBox="0 0 32 32"><g fill="none" stroke="#e00000" stroke-width="2.2" stroke-linecap="round"><path d="M6 10.5 L12 7 L6.5 28"/><ellipse cx="17.5" cy="15" rx="3" ry="6.8" transform="rotate(20 17.5 15)"/><ellipse cx="25.5" cy="14.8" rx="3" ry="6.8" transform="rotate(20 25.5 14.8)"/><path d="M12 26 Q20 24 26 25 M8 31 Q18 28 28 29"/></g></svg>
<div id="n6" class="t" style="left:384.00px;top:1296.16px;font-size:25.5px;color:#37352f;font-weight:400;letter-spacing:0.707px;-webkit-text-stroke:0.4px #37352f">Quality Control</div>
<div style="position:absolute;left:384.5px;top:1322.54px;width:177.10000000000002px;height:1.2px;background:#d9d8d5"></div>
<svg style="position:absolute;left:580.6999999999999px;top:1297.24px" width="29.6" height="28.2" viewBox="0 0 28 26"><path d="M4.6 2.5 H19.4 Q22.6 2.5 22.6 5.8 V13.6 Q22.6 16.6 19.4 16.6 H10.5 L5.5 20.8 V16.6 Q2 16.4 2 13.4 V5.8 Q2 2.5 4.6 2.5 Z" fill="none" stroke="#a3a29f" stroke-width="1.9" stroke-linejoin="round"/><path d="M7 7.2 H17.5 M7 10.4 H17.5 M7 13.6 H13" stroke="#a3a29f" stroke-width="1.3"/></svg>
<div class="t" style="left:614.3px;top:1298.73px;font-size:21px;color:#a3a29f">3</div>
<div style="position:absolute;left:902px;top:1292.3400000000001px;width:90px;height:36px;background:#eee0da;border-radius:5px"></div>
<div id="ty6" class="t" style="left:912.00px;top:1296.86px;font-size:25.5px;color:#442a1e;font-weight:400;letter-spacing:0.500px;">Guide</div>
<div style="position:absolute;left:1097px;top:1292.3400000000001px;width:299.7px;height:36px;background:#fadec9;border-radius:5px"></div>
<div id="tp6_0" class="t" style="left:1107.00px;top:1296.86px;font-size:25.5px;color:#49290e;font-weight:400;letter-spacing:0.241px;">Organization &amp; Planning</div>
<div style="position:absolute;left:1411.2px;top:1292.3400000000001px;width:318.8px;height:36px;background:#f5e0e9;border-radius:5px"></div>
<div id="tp6_1" class="t" style="left:1420.00px;top:1296.86px;font-size:25.5px;color:#4c2337;font-weight:400;letter-spacing:0.400px;">Meetings &amp; Presentations</div>
<div id="id6" class="t" style="left:1774.00px;top:1297.12px;font-size:25px;color:#9b9a97;font-weight:400;letter-spacing:0.000px;">RE-6</div>
<div style="position:absolute;left:285px;top:1339.5px;width:2012px;height:1.5px;background:linear-gradient(180deg,#f1f1f0,#e9e9e7 35%,#e9e9e7 65%,#f3f3f2)"></div>
<svg style="position:absolute;left:343px;top:1353.48px" width="32" height="32" viewBox="0 0 32 32"><path d="M8 22 Q14 19 20 18 L27 13 Q30 14 30 18 Q28 25 22 26 Q14 25 8 22 Z" fill="#d9201c"/><path d="M22 18 Q28 15 30 16 Q30 24 23 26 Z" fill="#2a140e"/><circle cx="17.5" cy="6.5" r="2.6" fill="#f5b93a"/><path d="M14 5 Q12 10 14 14 M20.5 4 Q22 8 19.5 11" stroke="#f5b93a" stroke-width="1.6" fill="none"/><rect x="15.5" y="9" width="4" height="9" fill="#d9201c"/><path d="M17 24 L14 31 M21 24 L24.5 31" stroke="#f0a830" stroke-width="1.4"/></svg>
<div id="n7" class="t" style="left:384.00px;top:1355.50px;font-size:25.5px;color:#37352f;font-weight:400;letter-spacing:0.581px;-webkit-text-stroke:0.4px #37352f">Team Offsite Plan</div>
<div style="position:absolute;left:384.5px;top:1381.8799999999999px;width:207.89999999999998px;height:1.2px;background:#d9d8d5"></div>
<div style="position:absolute;left:902px;top:1351.68px;width:128px;height:36px;background:#e3e2e0;border-radius:5px"></div>
<div id="ty7" class="t" style="left:913.00px;top:1356.20px;font-size:25.5px;color:#32302c;font-weight:400;letter-spacing:0.571px;">Template</div>
<div style="position:absolute;left:1097px;top:1351.68px;width:98.8px;height:36px;background:#dbeddb;border-radius:5px"></div>
<div id="tp7_0" class="t" style="left:1106.00px;top:1356.20px;font-size:25.5px;color:#1c3829;font-weight:400;letter-spacing:0.440px;">Events</div>
<div style="position:absolute;left:1210.3px;top:1351.68px;width:299.7px;height:36px;background:#fadec9;border-radius:5px"></div>
<div id="tp7_1" class="t" style="left:1220.00px;top:1356.20px;font-size:25.5px;color:#49290e;font-weight:400;letter-spacing:0.241px;">Organization &amp; Planning</div>
<div id="id7" class="t" style="left:1774.00px;top:1356.45px;font-size:25px;color:#9b9a97;font-weight:400;letter-spacing:0.000px;">RE-7</div>
<div style="position:absolute;left:285px;top:1398.5px;width:2012px;height:1.5px;background:linear-gradient(180deg,#f1f1f0,#e9e9e7 35%,#e9e9e7 65%,#f3f3f2)"></div>
<svg style="position:absolute;left:343px;top:1412.82px" width="32" height="32" viewBox="0 0 32 32"><defs><linearGradient id="g8i" x1="0" y1="0" x2="1" y2="1"><stop offset="0" stop-color="#d6eafa"/><stop offset="0.6" stop-color="#b4d6f2"/><stop offset="1" stop-color="#8cbce6"/></linearGradient></defs><path d="M4.5 8 Q4.5 5 7.5 5 L25.5 5 Q28.5 5 28.5 8 L28.5 26 Q28.5 30 25 30 L8 30 Q4.5 30 4.5 26 Z" fill="url(#g8i)"/><path d="M9 10 H13 V20 H9 Z M18 10 H23 V17 H18 Z" fill="#eef6fc" opacity="0.9"/><path d="M6 9 V24 M26 9 V24" stroke="#7ab0e0" stroke-width="1.2" opacity="0.6"/></svg>
<div id="n8" class="t" style="left:383.00px;top:1414.84px;font-size:25.5px;color:#37352f;font-weight:400;letter-spacing:0.650px;-webkit-text-stroke:0.4px #37352f">Icebreakers</div>
<div style="position:absolute;left:384.5px;top:1441.2199999999998px;width:144.10000000000002px;height:1.2px;background:#d9d8d5"></div>
<svg style="position:absolute;left:547.3px;top:1415.9199999999998px" width="29.6" height="28.2" viewBox="0 0 28 26"><path d="M4.6 2.5 H19.4 Q22.6 2.5 22.6 5.8 V13.6 Q22.6 16.6 19.4 16.6 H10.5 L5.5 20.8 V16.6 Q2 16.4 2 13.4 V5.8 Q2 2.5 4.6 2.5 Z" fill="none" stroke="#a3a29f" stroke-width="1.9" stroke-linejoin="round"/><path d="M7 7.2 H17.5 M7 10.4 H17.5 M7 13.6 H13" stroke="#a3a29f" stroke-width="1.3"/></svg>
<div class="t" style="left:580.9px;top:1417.41px;font-size:21px;color:#a3a29f">5</div>
<div style="position:absolute;left:902px;top:1411.02px;width:130px;height:36px;background:#e3e2e0;border-radius:5px"></div>
<div id="ty8" class="t" style="left:912.00px;top:1415.54px;font-size:25.5px;color:#32302c;font-weight:400;letter-spacing:0.625px;">Solutions</div>
<div style="position:absolute;left:1097px;top:1411.02px;width:318.8px;height:36px;background:#f5e0e9;border-radius:5px"></div>
<div id="tp8_0" class="t" style="left:1106.00px;top:1415.54px;font-size:25.5px;color:#4c2337;font-weight:400;letter-spacing:0.400px;">Meetings &amp; Presentations</div>
<div style="position:absolute;left:1430.3px;top:1411.02px;width:98.8px;height:36px;background:#dbeddb;border-radius:5px"></div>
<div id="tp8_1" class="t" style="left:1439.00px;top:1415.54px;font-size:25.5px;color:#1c3829;font-weight:400;letter-spacing:0.440px;">Events</div>
<div id="id8" class="t" style="left:1774.00px;top:1415.79px;font-size:25px;color:#9b9a97;font-weight:400;letter-spacing:0.000px;">RE-14</div>
<div style="position:absolute;left:285px;top:1457.5px;width:2012px;height:1.5px;background:linear-gradient(180deg,#f1f1f0,#e9e9e7 35%,#e9e9e7 65%,#f3f3f2)"></div>
<svg style="position:absolute;left:343px;top:1472.16px" width="32" height="32" viewBox="0 0 32 32"><path d="M5 3 H27 Q30 3 30 6 V27 Q30 30.5 26.5 30.5 H6 Q2 30.5 2 27 V7 Z" fill="#111"/><path d="M7 6 H26.5 Q27 6 27 6.5 V27.5 H7.5 Q6.5 27.5 6.5 26.5 V6.5 Z" fill="#fff"/><text x="17" y="25" font-family="Liberation Serif" font-weight="700" font-size="19" text-anchor="middle" fill="#111">N</text></svg>
<div id="n9" class="t" style="left:383.00px;top:1474.18px;font-size:25.5px;color:#37352f;font-weight:400;letter-spacing:0.721px;-webkit-text-stroke:0.4px #37352f">Notion for Workflows &amp; Organization</div>
<div style="position:absolute;left:384.5px;top:1500.56px;width:432.5px;height:1.2px;background:#d9d8d5"></div>
<div style="position:absolute;left:902px;top:1470.3600000000001px;width:130px;height:36px;background:#e3e2e0;border-radius:5px"></div>
<div id="ty9" class="t" style="left:912.00px;top:1474.88px;font-size:25.5px;color:#32302c;font-weight:400;letter-spacing:0.625px;">Solutions</div>
<div style="position:absolute;left:1097px;top:1470.3600000000001px;width:299.7px;height:36px;background:#fadec9;border-radius:5px"></div>
<div id="tp9_0" class="t" style="left:1107.00px;top:1474.88px;font-size:25.5px;color:#49290e;font-weight:400;letter-spacing:0.241px;">Organization &amp; Planning</div>
<div style="position:absolute;left:1411.2px;top:1470.3600000000001px;width:264.9px;height:36px;background:#d3e5ef;border-radius:5px"></div>
<div id="tp9_1" class="t" style="left:1422.00px;top:1474.88px;font-size:25.5px;color:#183347;font-weight:400;letter-spacing:0.386px;">Tasks &amp; Prioritization</div>
<div id="id9" class="t" style="left:1774.00px;top:1475.13px;font-size:25px;color:#9b9a97;font-weight:400;letter-spacing:0.000px;">RE-12</div>
<div style="position:absolute;left:285px;top:1517.5px;width:2012px;height:1.5px;background:linear-gradient(180deg,#f1f1f0,#e9e9e7 35%,#e9e9e7 65%,#f3f3f2)"></div>
<svg style="position:absolute;left:343px;top:1531.5000000000002px" width="32" height="32" viewBox="0 0 32 32"><defs><linearGradient id="g10s" x1="0" y1="0" x2="0" y2="1"><stop offset="0" stop-color="#9aabb5"/><stop offset="1" stop-color="#6f8491"/></linearGradient></defs><rect x="1" y="1.5" width="30" height="30" rx="5.5" fill="#60747f"/><rect x="2" y="2.5" width="28" height="28" rx="4.5" fill="url(#g10s)"/><path d="M5 11.5 H10 Q13 11.5 15.5 16.5 Q18 21.5 21 21.5 H24.5 M5 21.5 H10 Q13 21.5 15.5 16.5 Q18 11.5 21 11.5 H24.5" stroke="#f4f6f8" stroke-width="2.6" fill="none"/><path d="M23.5 7.5 L28.5 11.5 L23.5 15.5 Z M23.5 17.5 L28.5 21.5 L23.5 25.5 Z" fill="#f4f6f8"/></svg>
<div id="n10" class="t" style="left:384.00px;top:1533.52px;font-size:25.5px;color:#37352f;font-weight:400;letter-spacing:-0.050px;-webkit-text-stroke:0.4px #37352f">SOP Doc</div>
<div style="position:absolute;left:384.5px;top:1559.9px;width:104.30000000000001px;height:1.2px;background:#d9d8d5"></div>
<div style="position:absolute;left:902px;top:1529.7000000000003px;width:128px;height:36px;background:#e3e2e0;border-radius:5px"></div>
<div id="ty10" class="t" style="left:913.00px;top:1534.22px;font-size:25.5px;color:#32302c;font-weight:400;letter-spacing:0.571px;">Template</div>
<div style="position:absolute;left:1097px;top:1529.7000000000003px;width:299.7px;height:36px;background:#fadec9;border-radius:5px"></div>
<div id="tp10_0" class="t" style="left:1107.00px;top:1534.22px;font-size:25.5px;color:#49290e;font-weight:400;letter-spacing:0.241px;">Organization &amp; Planning</div>
<div id="id10" class="t" style="left:1774.00px;top:1534.48px;font-size:25px;color:#9b9a97;font-weight:400;letter-spacing:0.000px;">RE-13</div>
<div style="position:absolute;left:285px;top:1576.5px;width:2012px;height:1.5px;background:linear-gradient(180deg,#f1f1f0,#e9e9e7 35%,#e9e9e7 65%,#f3f3f2)"></div>
<svg style="position:absolute;left:343px;top:1590.84px" width="32" height="32" viewBox="0 0 32 32"><rect x="1" y="7" width="30" height="20" rx="1" fill="#e8e8e8"/><path d="M1.5 7.5 L16 18 L30.5 7.5" stroke="#c8c8c8" stroke-width="0.8" fill="none"/><path d="M16 24 Q9 19 10 14.5 Q11 11.5 13.5 12 Q15.3 12.4 16 14 Q16.7 12.4 18.5 12 Q21 11.5 22 14.5 Q23 19 16 24 Z" fill="#e8202a"/></svg>
<div id="n11" class="t" style="left:384.00px;top:1592.86px;font-size:25.5px;color:#37352f;font-weight:400;letter-spacing:0.509px;-webkit-text-stroke:0.4px #37352f">Creating Email Templates</div>
<div style="position:absolute;left:384.5px;top:1619.2399999999998px;width:300.29999999999995px;height:1.2px;background:#d9d8d5"></div>
<svg style="position:absolute;left:703.4px;top:1593.9399999999998px" width="29.6" height="28.2" viewBox="0 0 28 26"><path d="M4.6 2.5 H19.4 Q22.6 2.5 22.6 5.8 V13.6 Q22.6 16.6 19.4 16.6 H10.5 L5.5 20.8 V16.6 Q2 16.4 2 13.4 V5.8 Q2 2.5 4.6 2.5 Z" fill="none" stroke="#a3a29f" stroke-width="1.9" stroke-linejoin="round"/><path d="M7 7.2 H17.5 M7 10.4 H17.5 M7 13.6 H13" stroke="#a3a29f" stroke-width="1.3"/></svg>
<div class="t" style="left:737px;top:1595.43px;font-size:21px;color:#a3a29f">2</div>
<div style="position:absolute;left:902px;top:1589.04px;width:90px;height:36px;background:#eee0da;border-radius:5px"></div>
<div id="ty11" class="t" style="left:912.00px;top:1593.56px;font-size:25.5px;color:#442a1e;font-weight:400;letter-spacing:0.500px;">Guide</div>
<div style="position:absolute;left:1097px;top:1589.04px;width:203.1px;height:36px;background:#fdecc8;border-radius:5px"></div>
<div id="tp11_0" class="t" style="left:1107.00px;top:1593.56px;font-size:25.5px;color:#402c1b;font-weight:400;letter-spacing:0.492px;">Communication</div>
<div id="id11" class="t" style="left:1774.00px;top:1593.81px;font-size:25px;color:#9b9a97;font-weight:400;letter-spacing:0.000px;">RE-8</div>
<div style="position:absolute;left:285px;top:1635.5px;width:2012px;height:1.5px;background:linear-gradient(180deg,#f1f1f0,#e9e9e7 35%,#e9e9e7 65%,#f3f3f2)"></div>
<svg style="position:absolute;left:343px;top:1650.18px" width="32" height="32" viewBox="0 0 32 32"><path d="M4.5 16.5 L12 27 L29 4.5" fill="none" stroke="#484644" stroke-width="4.6" stroke-linecap="round" stroke-linejoin="round"/></svg>
<div id="n12" class="t" style="left:383.00px;top:1652.20px;font-size:25.5px;color:#37352f;font-weight:400;letter-spacing:0.571px;-webkit-text-stroke:0.4px #37352f">Executive’s Scheduling Checklist</div>
<div style="position:absolute;left:384.5px;top:1678.58px;width:389.29999999999995px;height:1.2px;background:#d9d8d5"></div>
<div style="position:absolute;left:902px;top:1648.38px;width:128px;height:36px;background:#e3e2e0;border-radius:5px"></div>
<div id="ty12" class="t" style="left:913.00px;top:1652.90px;font-size:25.5px;color:#32302c;font-weight:400;letter-spacing:0.571px;">Template</div>
<div style="position:absolute;left:1097px;top:1648.38px;width:283.9px;height:36px;background:#e8deee;border-radius:5px"></div>
<div id="tp12_0" class="t" style="left:1107.00px;top:1652.90px;font-size:25.5px;color:#412454;font-weight:400;letter-spacing:0.172px;">Calendar Management</div>
<div style="position:absolute;left:1395.4px;top:1648.38px;width:264.9px;height:36px;background:#d3e5ef;border-radius:5px"></div>
<div id="tp12_1" class="t" style="left:1406.00px;top:1652.90px;font-size:25.5px;color:#183347;font-weight:400;letter-spacing:0.386px;">Tasks &amp; Prioritization</div>
<div id="id12" class="t" style="left:1774.00px;top:1653.15px;font-size:25px;color:#9b9a97;font-weight:400;letter-spacing:0.000px;">RE-9</div>
<div style="position:absolute;left:285px;top:1695.5px;width:2012px;height:1.5px;background:linear-gradient(180deg,#f1f1f0,#e9e9e7 35%,#e9e9e7 65%,#f3f3f2)"></div>
<svg style="position:absolute;left:343px;top:1709.5200000000002px" width="32" height="32" viewBox="0 0 32 32"><defs><linearGradient id="g13c" x1="0" y1="0" x2="0" y2="1"><stop offset="0" stop-color="#3e3e3e"/><stop offset="1" stop-color="#8e8e8e"/></linearGradient><linearGradient id="g13k" x1="0" y1="0" x2="0" y2="1"><stop offset="0" stop-color="#ffffff"/><stop offset="1" stop-color="#c8c8c8"/></linearGradient></defs><rect x="0.5" y="1" width="31.5" height="31.5" rx="7" fill="url(#g13c)"/><path d="M5 17.5 L12.5 25.5 L27.5 8" fill="none" stroke="url(#g13k)" stroke-width="4.8" stroke-linejoin="miter"/></svg>
<div id="n13" class="t" style="left:384.00px;top:1711.54px;font-size:25.5px;color:#37352f;font-weight:400;letter-spacing:0.558px;-webkit-text-stroke:0.4px #37352f">Task Management Checklist</div>
<div style="position:absolute;left:384.5px;top:1737.92px;width:332.20000000000005px;height:1.2px;background:#d9d8d5"></div>
<div style="position:absolute;left:902px;top:1707.7200000000003px;width:128px;height:36px;background:#e3e2e0;border-radius:5px"></div>
<div id="ty13" class="t" style="left:913.00px;top:1712.24px;font-size:25.5px;color:#32302c;font-weight:400;letter-spacing:0.571px;">Template</div>
<div style="position:absolute;left:1097px;top:1707.7200000000003px;width:264.9px;height:36px;background:#d3e5ef;border-radius:5px"></div>
<div id="tp13_0" class="t" style="left:1108.00px;top:1712.24px;font-size:25.5px;color:#183347;font-weight:400;letter-spacing:0.386px;">Tasks &amp; Prioritization</div>
<div style="position:absolute;left:1376.4px;top:1707.7200000000003px;width:203.1px;height:36px;background:#fdecc8;border-radius:5px"></div>
<div id="tp13_1" class="t" style="left:1386.00px;top:1712.24px;font-size:25.5px;color:#402c1b;font-weight:400;letter-spacing:0.575px;">Communication</div>
<div id="id13" class="t" style="left:1774.00px;top:1712.50px;font-size:25px;color:#9b9a97;font-weight:400;letter-spacing:0.000px;">RE-10</div>
<div style="position:absolute;left:285px;top:1754.5px;width:2012px;height:1.5px;background:linear-gradient(180deg,#f1f1f0,#e9e9e7 35%,#e9e9e7 65%,#f3f3f2)"></div>
<svg style="position:absolute;left:343px;top:1768.86px" width="32" height="32" viewBox="0 0 32 32"><defs><linearGradient id="g14r" x1="0" y1="0" x2="0" y2="1"><stop offset="0" stop-color="#e2e2e2"/><stop offset="1" stop-color="#cfcfcf"/></linearGradient></defs><rect x="3" y="1" width="26" height="25" fill="url(#g14r)"/><path d="M6 5 H25 M6 8.5 H25 M6 12 H25 M6 15.5 H25 M6 19 H20" stroke="#c4c4c4" stroke-width="1"/><path d="M1 27.5 L29 20 L29 26 L2 31 Z" fill="#b8b8b8"/><path d="M3 27 L28.5 21" stroke="#e8e8e8" stroke-width="1.2"/></svg>
<div id="n14" class="t" style="left:385.00px;top:1770.88px;font-size:25.5px;color:#37352f;font-weight:400;letter-spacing:0.600px;-webkit-text-stroke:0.4px #37352f">Weekly Briefing</div>
<div style="position:absolute;left:384.5px;top:1797.2599999999998px;width:184.60000000000002px;height:1.2px;background:#d9d8d5"></div>
<div style="position:absolute;left:902px;top:1767.06px;width:128px;height:36px;background:#e3e2e0;border-radius:5px"></div>
<div id="ty14" class="t" style="left:913.00px;top:1771.58px;font-size:25.5px;color:#32302c;font-weight:400;letter-spacing:0.571px;">Template</div>
<div style="position:absolute;left:1097px;top:1767.06px;width:264.9px;height:36px;background:#d3e5ef;border-radius:5px"></div>
<div id="tp14_0" class="t" style="left:1108.00px;top:1771.58px;font-size:25.5px;color:#183347;font-weight:400;letter-spacing:0.386px;">Tasks &amp; Prioritization</div>
<div style="position:absolute;left:1376.4px;top:1767.06px;width:299.7px;height:36px;background:#fadec9;border-radius:5px"></div>
<div id="tp14_1" class="t" style="left:1386.00px;top:1771.58px;font-size:25.5px;color:#49290e;font-weight:400;letter-spacing:0.241px;">Organization &amp; Planning</div>
<div id="id14" class="t" style="left:1774.00px;top:1771.83px;font-size:25px;color:#9b9a97;font-weight:400;letter-spacing:0.000px;">RE-11</div>
<div style="position:absolute;left:285px;top:1813.5px;width:2012px;height:1.5px;background:linear-gradient(180deg,#f1f1f0,#e9e9e7 35%,#e9e9e7 65%,#f3f3f2)"></div>
</div>
<div style="position:absolute;left:886.8px;top:925px;width:1.2px;height:880px;background:#ebebea"></div>
<div style="position:absolute;left:1080.4px;top:925px;width:1.2px;height:880px;background:#ebebea"></div>
<div style="position:absolute;left:1757.6000000000001px;top:925px;width:1.2px;height:880px;background:#ebebea"></div>
<div style="position:absolute;left:1872.6000000000001px;top:925px;width:1.2px;height:880px;background:#ebebea"></div>
<div style="position:absolute;left:285px;top:1804.1px;width:2012px;height:1.2px;background:#ebebea"></div>
<div style="position:absolute;left:2375.5px;top:1767px;width:66px;height:66px;background:#fff;border-radius:50%;box-sizing:border-box;border:1.6px solid #dcdbd9;box-shadow:0 4px 10px rgba(0,0,0,0.07)"></div>
<svg style="position:absolute;left:2380px;top:1770px" width="60" height="60" viewBox="0 0 60 60"><path d="M21.4 18.099999999999998 C21.90 22.01 23.79 23.90 27.70 24.40 C23.79 24.90 21.90 26.79 21.40 30.70 C20.90 26.79 19.01 24.90 15.10 24.40 C19.01 23.90 20.90 22.01 21.40 18.10 Z" fill="#2f2d29"/><path d="M32.4 23.400000000000002 C33.26 30.03 36.47 33.24 43.10 34.10 C36.47 34.96 33.26 38.17 32.40 44.80 C31.54 38.17 28.33 34.96 21.70 34.10 C28.33 33.24 31.54 30.03 32.40 23.40 Z" fill="#2f2d29"/></svg>
</body></html>
